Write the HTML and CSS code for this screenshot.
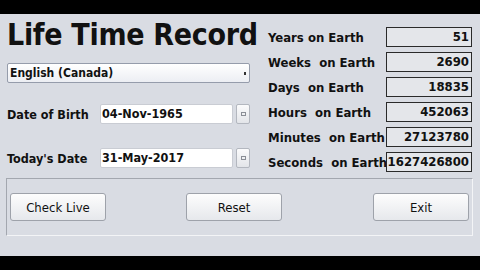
FILE: index.html
```html
<!DOCTYPE html>
<html lang="en">
<head>
    <meta charset="UTF-8">
    <meta name="viewport" content="width=device-width, initial-scale=1.0">
    <title>Life Time Record</title>
    <link rel="stylesheet" href="styles.css">
</head>
<body>

    <div class="bar"></div>

    <div class="window">
        <div class="main">
            <div class="left">
                <h1 class="title">Life Time Record</h1>
                <div class="select">
                    <span>English (Canada)</span>
                    <span class="arrow"></span>
                </div>
                <div class="date-row dob">
                    <label>Date of Birth</label>
                    <div class="date-box">04-Nov-1965</div>
                    <button class="pick-btn"><span></span></button>
                </div>
                <div class="date-row today">
                    <label>Today's Date</label>
                    <div class="date-box">31-May-2017</div>
                    <button class="pick-btn"><span></span></button>
                </div>
            </div>

            <div class="right">
                <div class="stat"><span class="stat-label">Years on Earth</span><span class="stat-value">51</span></div>
                <div class="stat"><span class="stat-label">Weeks  on Earth</span><span class="stat-value">2690</span></div>
                <div class="stat"><span class="stat-label">Days  on Earth</span><span class="stat-value">18835</span></div>
                <div class="stat"><span class="stat-label">Hours  on Earth</span><span class="stat-value">452063</span></div>
                <div class="stat"><span class="stat-label">Minutes  on Earth</span><span class="stat-value">27123780</span></div>
                <div class="stat"><span class="stat-label">Seconds  on Earth</span><span class="stat-value">1627426800</span></div>
            </div>
        </div>

        <div class="panel">
            <button class="btn">Check Live</button>
            <button class="btn reset">Reset</button>
            <button class="btn exit">Exit</button>
        </div>
    </div>

    <div class="bar"></div>

</body>
</html>
```

FILE: styles.css
```css
* {
    margin: 0;
    padding: 0;
    box-sizing: border-box;
}

body {
    width: 480px;
    height: 270px;
    overflow: hidden;
    background: #000;
    font-family: 'DejaVu Sans Condensed', 'DejaVu Sans', sans-serif;
    color: #111;
}

.bar {
    height: 14px;
    background: #000;
}

.window {
    height: 242px;
    background: #d9dce3;
    padding: 0 7px 0 6px;
}

.main {
    display: flex;
    height: 164px;
}

.left {
    width: 244px;
    padding-left: 1px;
}

.title {
    font-size: 30px;
    font-weight: bold;
    line-height: 34px;
    padding-top: 4px;
    white-space: nowrap;
    letter-spacing: -0.3px;
}

.select {
    margin-top: 11px;
    height: 20px;
    width: 243px;
    border: 1px solid #959cab;
    border-radius: 2px;
    background: linear-gradient(#ffffff, #eceef3);
    display: flex;
    align-items: center;
    justify-content: space-between;
    padding: 0 3px 0 2px;
    font-size: 12px;
    font-weight: bold;
}

.arrow {
    width: 2px;
    height: 3px;
    background: #333;
}

.date-row {
    display: flex;
    align-items: center;
    height: 20px;
}

.dob {
    margin-top: 21px;
}

.today {
    margin-top: 24px;
}

.date-row label {
    width: 93px;
    font-size: 12.5px;
    font-weight: bold;
}

.date-box {
    width: 133px;
    height: 20px;
    background: #fff;
    border: 1px solid #c9ccd3;
    border-radius: 2px;
    font-size: 12.5px;
    font-weight: bold;
    padding: 1px 1px;
}

.pick-btn {
    margin-left: 3px;
    width: 14px;
    height: 20px;
    border: 1px solid #b3b7bf;
    border-radius: 2px;
    background: linear-gradient(#fbfbfc, #e3e5e9);
    display: flex;
    align-items: center;
    justify-content: center;
}

.pick-btn span {
    width: 5px;
    height: 4px;
    border: 1px solid #8a8e96;
}

.right {
    margin-left: 18px;
    padding-top: 13px;
    display: flex;
    flex-direction: column;
    gap: 5px;
}

.stat {
    display: flex;
    align-items: center;
    height: 20px;
}

.stat-label {
    width: 118px;
    white-space: pre;
    font-size: 13px;
    font-weight: bold;
}

.stat-value {
    width: 86px;
    height: 20px;
    border: 1px solid #2a2a2a;
    background: #e4e6ea;
    text-align: right;
    font-size: 13px;
    font-weight: bold;
    line-height: 18px;
    padding-right: 2px;
}

.panel {
    height: 58px;
    border-top: 1px solid #a3a7af;
    border-left: 1px solid #a3a7af;
    border-right: 1px solid #f3f4f6;
    border-bottom: 1px solid #f3f4f6;
    display: flex;
    align-items: center;
    padding: 0 3px;
}

.btn {
    width: 96px;
    height: 28px;
    border: 1px solid #9ea2aa;
    border-radius: 3px;
    background: linear-gradient(#fdfdfd, #e6e8ec);
    font-family: 'DejaVu Sans Condensed', 'DejaVu Sans', sans-serif;
    font-size: 13px;
    color: #111;
}

.reset {
    margin-left: 80px;
}

.exit {
    margin-left: auto;
}
```
